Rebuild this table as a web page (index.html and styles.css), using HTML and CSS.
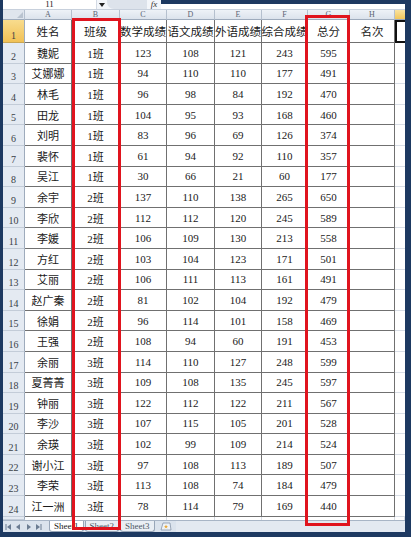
FILE: index.html
```html
<!DOCTYPE html>
<html lang="zh">
<head>
<meta charset="utf-8">
<title>成绩表</title>
<link rel="stylesheet" href="styles.css">
</head>
<body>
<div class="window">
  <div class="fbar">
    <div class="namebox"><span class="nb-text">11</span></div>
    <div class="nb-drop"><svg width="6" height="4" viewBox="0 0 6 4"><path d="M0 0 H6 L3 4 Z" fill="#222"/></svg></div>
    <div class="fx-zone"></div>
    <div class="fx">fx</div>
    <div class="finput"></div>
  </div>
  <div class="row colhdr">
    <div class="corner"><svg width="8" height="8" viewBox="0 0 8 8"><path d="M7 1 L7 7 L1 7 Z" fill="#b9c3cf"/></svg></div>
    <div class="ch">A</div><div class="ch">B</div><div class="ch">C</div><div class="ch">D</div><div class="ch">E</div><div class="ch">F</div><div class="ch">G</div><div class="ch">H</div><div class="ch ch-sel"></div>
  </div>
  <div class="row r1">
    <div class="rh rh-sel">1</div>
    <div class="c">姓名</div><div class="c">班级</div><div class="c">数学成绩</div><div class="c">语文成绩</div><div class="c">外语成绩</div><div class="c">综合成绩</div><div class="c">总分</div><div class="c">名次</div><div class="x x-sel"></div>
  </div>
  <div class="row"><div class="rh">2</div><div class="c">魏妮</div><div class="c">1班</div><div class="c">123</div><div class="c">108</div><div class="c">121</div><div class="c">243</div><div class="c">595</div><div class="c"></div><div class="x"></div></div>
  <div class="row"><div class="rh">3</div><div class="c">艾娜娜</div><div class="c">1班</div><div class="c">94</div><div class="c">110</div><div class="c">110</div><div class="c">177</div><div class="c">491</div><div class="c"></div><div class="x"></div></div>
  <div class="row"><div class="rh">4</div><div class="c">林毛</div><div class="c">1班</div><div class="c">96</div><div class="c">98</div><div class="c">84</div><div class="c">192</div><div class="c">470</div><div class="c"></div><div class="x"></div></div>
  <div class="row"><div class="rh">5</div><div class="c">田龙</div><div class="c">1班</div><div class="c">104</div><div class="c">95</div><div class="c">93</div><div class="c">168</div><div class="c">460</div><div class="c"></div><div class="x"></div></div>
  <div class="row"><div class="rh">6</div><div class="c">刘明</div><div class="c">1班</div><div class="c">83</div><div class="c">96</div><div class="c">69</div><div class="c">126</div><div class="c">374</div><div class="c"></div><div class="x"></div></div>
  <div class="row"><div class="rh">7</div><div class="c">裴怀</div><div class="c">1班</div><div class="c">61</div><div class="c">94</div><div class="c">92</div><div class="c">110</div><div class="c">357</div><div class="c"></div><div class="x"></div></div>
  <div class="row"><div class="rh">8</div><div class="c">吴江</div><div class="c">1班</div><div class="c">30</div><div class="c">66</div><div class="c">21</div><div class="c">60</div><div class="c">177</div><div class="c"></div><div class="x"></div></div>
  <div class="row"><div class="rh">9</div><div class="c">余宇</div><div class="c">2班</div><div class="c">137</div><div class="c">110</div><div class="c">138</div><div class="c">265</div><div class="c">650</div><div class="c"></div><div class="x"></div></div>
  <div class="row"><div class="rh">10</div><div class="c">李欣</div><div class="c">2班</div><div class="c">112</div><div class="c">112</div><div class="c">120</div><div class="c">245</div><div class="c">589</div><div class="c"></div><div class="x"></div></div>
  <div class="row"><div class="rh">11</div><div class="c">李媛</div><div class="c">2班</div><div class="c">106</div><div class="c">109</div><div class="c">130</div><div class="c">213</div><div class="c">558</div><div class="c"></div><div class="x"></div></div>
  <div class="row"><div class="rh">12</div><div class="c">方红</div><div class="c">2班</div><div class="c">103</div><div class="c">104</div><div class="c">123</div><div class="c">171</div><div class="c">501</div><div class="c"></div><div class="x"></div></div>
  <div class="row"><div class="rh">13</div><div class="c">艾丽</div><div class="c">2班</div><div class="c">106</div><div class="c">111</div><div class="c">113</div><div class="c">161</div><div class="c">491</div><div class="c"></div><div class="x"></div></div>
  <div class="row"><div class="rh">14</div><div class="c">赵广秦</div><div class="c">2班</div><div class="c">81</div><div class="c">102</div><div class="c">104</div><div class="c">192</div><div class="c">479</div><div class="c"></div><div class="x"></div></div>
  <div class="row"><div class="rh">15</div><div class="c">徐娟</div><div class="c">2班</div><div class="c">96</div><div class="c">114</div><div class="c">101</div><div class="c">158</div><div class="c">469</div><div class="c"></div><div class="x"></div></div>
  <div class="row"><div class="rh">16</div><div class="c">王强</div><div class="c">2班</div><div class="c">108</div><div class="c">94</div><div class="c">60</div><div class="c">191</div><div class="c">453</div><div class="c"></div><div class="x"></div></div>
  <div class="row"><div class="rh">17</div><div class="c">余丽</div><div class="c">3班</div><div class="c">114</div><div class="c">110</div><div class="c">127</div><div class="c">248</div><div class="c">599</div><div class="c"></div><div class="x"></div></div>
  <div class="row"><div class="rh">18</div><div class="c">夏菁菁</div><div class="c">3班</div><div class="c">109</div><div class="c">108</div><div class="c">135</div><div class="c">245</div><div class="c">597</div><div class="c"></div><div class="x"></div></div>
  <div class="row"><div class="rh">19</div><div class="c">钟丽</div><div class="c">3班</div><div class="c">122</div><div class="c">112</div><div class="c">122</div><div class="c">211</div><div class="c">567</div><div class="c"></div><div class="x"></div></div>
  <div class="row"><div class="rh">20</div><div class="c">李沙</div><div class="c">3班</div><div class="c">107</div><div class="c">115</div><div class="c">105</div><div class="c">201</div><div class="c">528</div><div class="c"></div><div class="x"></div></div>
  <div class="row"><div class="rh">21</div><div class="c">余瑛</div><div class="c">3班</div><div class="c">102</div><div class="c">99</div><div class="c">109</div><div class="c">214</div><div class="c">524</div><div class="c"></div><div class="x"></div></div>
  <div class="row"><div class="rh">22</div><div class="c">谢小江</div><div class="c">3班</div><div class="c">97</div><div class="c">108</div><div class="c">113</div><div class="c">189</div><div class="c">507</div><div class="c"></div><div class="x"></div></div>
  <div class="row"><div class="rh">23</div><div class="c">李荣</div><div class="c">3班</div><div class="c">113</div><div class="c">108</div><div class="c">74</div><div class="c">184</div><div class="c">479</div><div class="c"></div><div class="x"></div></div>
  <div class="row"><div class="rh">24</div><div class="c">江一洲</div><div class="c">3班</div><div class="c">78</div><div class="c">114</div><div class="c">79</div><div class="c">169</div><div class="c">440</div><div class="c"></div><div class="x"></div></div>
  <div class="row rest"><div class="rh"></div><div class="e"></div><div class="e"></div><div class="e"></div><div class="e"></div><div class="e"></div><div class="e"></div><div class="e"></div><div class="e"></div><div class="e"></div></div>
  <div class="tabs">
    <div class="nav">
      <svg width="38" height="8" viewBox="0 0 38 8">
        <path d="M1 1 V7" stroke="#6b7c92" stroke-width="1"/><path d="M6 1 L2 4 L6 7 Z" fill="#6b7c92"/>
        <path d="M15 1 L11 4 L15 7 Z" fill="#6b7c92"/>
        <path d="M22 1 L26 4 L22 7 Z" fill="#6b7c92"/>
        <path d="M31 1 L35 4 L31 7 Z" fill="#6b7c92"/><path d="M36 1 V7" stroke="#6b7c92" stroke-width="1"/>
      </svg>
    </div>
    <div class="tab tab-on">Sheet1</div>
    <div class="tab">Sheet2</div>
    <div class="tab">Sheet3</div>
    <div class="newtab"><svg width="14" height="9" viewBox="0 0 14 9"><path d="M2 8 L4 1 H11 L12 8 Z" fill="#eef2f7" stroke="#8696aa" stroke-width="0.8"/><path d="M7 2.5 L7.6 4 L9 4 L7.9 5 L8.3 6.5 L7 5.6 L5.7 6.5 L6.1 5 L5 4 L6.4 4 Z" fill="#e9a93a"/></svg></div>
    <div class="tabfill"></div>
  </div>
</div>
<div class="mark mark-b"></div>
<div class="mark mark-g"></div>
</body>
</html>
```
FILE: styles.css
```css
* { box-sizing: border-box; margin: 0; padding: 0; }
html, body { width: 411px; height: 537px; overflow: hidden; }
body {
  background: #1d3961;
  font-family: "Liberation Serif", "Noto Sans CJK SC", serif;
  color: #1a1a1a;
}
.window {
  margin-left: 3px;
  width: 402px;
  height: 532px;
  background: #fff;
  display: flex;
  flex-direction: column;
  overflow: hidden;
}
/* formula bar */
.fbar {
  height: 10px;
  display: flex;
  background: #f3f6fa;
  border-bottom: 1px solid #c7d0dc;
}
.namebox {
  width: 94px;
  background: #fff;
  display: flex;
  justify-content: center;
  align-items: flex-end;
  border-right: 1px solid #d3dae4;
}
.nb-text {
  font-size: 9px;
  line-height: 9px;
  color: #222;
}
.nb-drop {
  width: 10px;
  display: flex;
  justify-content: center;
  align-items: center;
}
.fx-zone {
  width: 40px;
  background: #dde3eb;
  border-radius: 0 0 0 7px;
}
.fx {
  width: 14px;
  font-style: italic;
  font-size: 9px;
  line-height: 9px;
  text-align: center;
  color: #333;
}
.finput {
  flex: 1;
  background: #fff;
  border-top: 4px solid #1d3961;
}
/* grid rows */
.row {
  display: grid;
  grid-template-columns: 22px 47px 48px 47px 48px 47px 46px 42px 45px 10px;
  height: 20.6px;
  flex: none;
}
.colhdr { height: 10px; }
.r1 { height: 23px; }
.rest { flex: 1; height: auto; }
.corner {
  background: #dfe5ed;
  border-right: 1px solid #b5c0ce;
  border-bottom: 1px solid #9eabbc;
  display: flex;
  align-items: flex-end;
  justify-content: flex-end;
}
.ch {
  background: linear-gradient(#eef2f7, #dce3ec);
  border-right: 1px solid #b5c0ce;
  border-bottom: 1px solid #9eabbc;
  font-size: 8px;
  line-height: 9px;
  text-align: center;
  color: #5b6573;
}
.ch-sel {
  background: linear-gradient(#f9e3a0, #f2c65a);
  border-right: none;
}
.rh {
  background: #e4eaf2;
  border-right: 1px solid #9eabbc;
  border-bottom: 1px solid #c3ccd8;
  font-size: 10px;
  color: #3a3f47;
  display: flex;
  align-items: flex-end;
  justify-content: center;
  line-height: 12px;
}
.rh-sel {
  background: linear-gradient(#f8dc8e, #f1c155);
  border-bottom-color: #c9a552;
}
.c {
  border-right: 1px solid #707070;
  border-bottom: 1px solid #707070;
  display: flex;
  align-items: center;
  justify-content: center;
  font-size: 11px;
  white-space: nowrap;
  overflow: hidden;
}
.r1 .c { font-size: 11.5px; }
.x {
  border-bottom: 1px solid #d8dde5;
}
.x-sel {
  border: 2px solid #111;
  border-right: none;
}
.e {
  border-right: 1px solid #d8dde5;
}
/* sheet tabs */
.tabs {
  height: 12px;
  flex: none;
  display: flex;
  align-items: stretch;
  background: #dbe3ed;
  border-top: 1px solid #a8b5c6;
}
.nav {
  width: 46px;
  display: flex;
  align-items: center;
  padding-left: 2px;
}
.tab {
  font-size: 9px;
  line-height: 10px;
  color: #4d5866;
  padding: 0 4px;
  margin-right: 1px;
  border: 1px solid #98a6b8;
  border-top: none;
  border-radius: 0 0 3px 3px;
  background: #e9eef4;
}
.tab-on {
  background: #fff;
  color: #222;
}
.newtab {
  width: 20px;
  display: flex;
  align-items: center;
  justify-content: center;
}
.tabfill { flex: 1; background: #e3e9f1; }
/* red annotation boxes */
.mark {
  position: absolute;
  border: 3px solid #e0141e;
}
.mark-b { left: 72px; top: 18px; width: 49px; height: 512px; }
.mark-g { left: 305px; top: 15px; width: 45px; height: 511px; }
```
